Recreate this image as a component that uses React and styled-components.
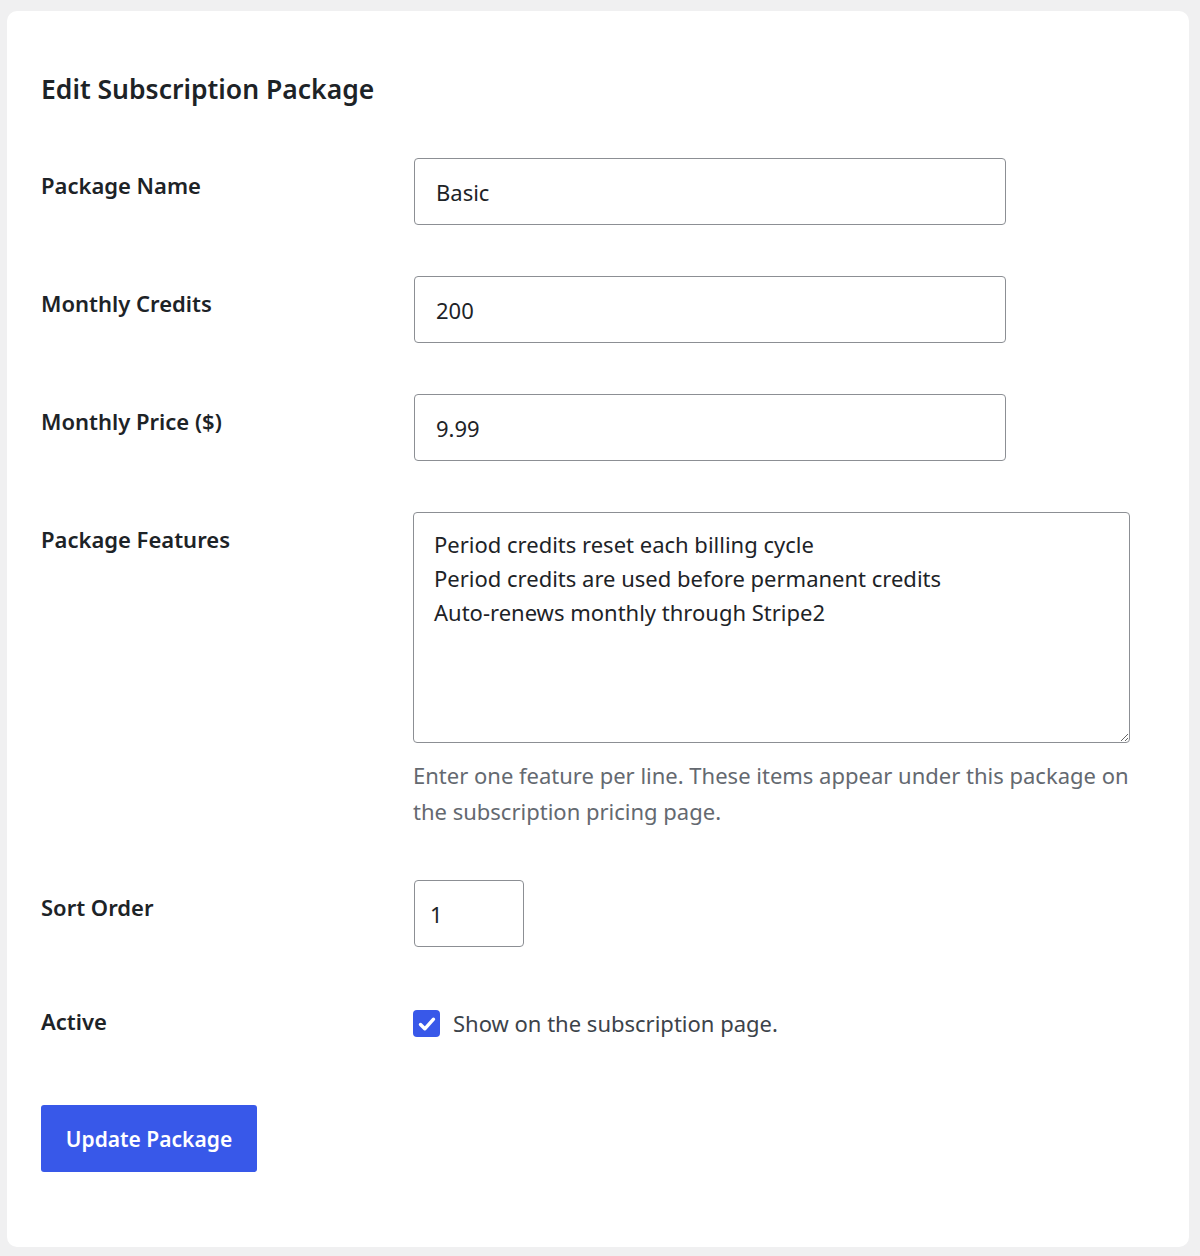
import React from 'react';
import styled, { createGlobalStyle } from 'styled-components';

const GlobalStyle = createGlobalStyle`
  html, body {
    margin: 0;
    padding: 0;
    background: #f0f0f1;
  }
  body {
    font-family: "Noto Sans", "Liberation Sans", sans-serif;
    color: #1d2327;
  }
`;

const Card = styled.div`
  margin: 11px 11px 9px 7px;
  background: #fff;
  border-radius: 10px;
  padding: 58px 34px 75px 34px;
  box-sizing: border-box;
  min-height: 1236px;
`;

const Title = styled.h1`
  margin: 0 0 24px;
  font-size: 26.5px;
  font-weight: 600;
  line-height: 40px;
  color: #1d2327;
`;

const Row = styled.div`
  display: grid;
  grid-template-columns: 373px 1fr;
  align-items: start;
  padding: ${(p) => p.$top || 25}px 0 26px;
`;

const Label = styled.label`
  padding-top: 12px;
  font-size: 22px;
  font-weight: 600;
  line-height: 30px;
`;

const Field = styled.input`
  display: block;
  box-sizing: border-box;
  width: ${(p) => p.$width || 592}px;
  height: 67px;
  padding: 0 ${(p) => p.$pad || 21}px;
  border: 1px solid #8c8f94;
  border-radius: 4px;
  font-family: inherit;
  font-size: 22px;
  color: #1d2327;
  background: #fff;
  outline: none;
`;

const TextArea = styled.textarea`
  display: block;
  box-sizing: border-box;
  width: 717px;
  height: 231px;
  margin-left: -1px;
  padding: 14px 20px;
  border: 1px solid #8c8f94;
  border-radius: 4px;
  font-family: inherit;
  font-size: 22px;
  line-height: 34px;
  color: #1d2327;
  outline: none;
`;

const Description = styled.p`
  margin: 14px 0 0 -1px;
  font-size: 22px;
  line-height: 36px;
  color: #646970;
  max-width: 722px;
`;

const CheckLine = styled.label`
  display: flex;
  align-items: center;
  gap: 13px;
  margin: 16px 0 0 -1px;
  font-size: 22px;
  line-height: 27px;
  color: #3c434a;
`;

const Box = styled.span`
  display: inline-flex;
  align-items: center;
  justify-content: center;
  width: 27px;
  height: 27px;
  border-radius: 4px;
  background: #3858e9;
`;

const Button = styled.button`
  margin-top: 42px;
  width: 216px;
  height: 67px;
  border: none;
  border-radius: 3px;
  background: #3858e9;
  color: #fff;
  font-family: inherit;
  font-size: 21px;
  font-weight: 600;
  cursor: pointer;
`;

const features = `Period credits reset each billing cycle
Period credits are used before permanent credits
Auto-renews monthly through Stripe2`;

const App = () => {
  return (
    <>
      <GlobalStyle />
      <Card>
        <Title>Edit Subscription Package</Title>
        <Row>
          <Label>Package Name</Label>
          <Field defaultValue="Basic" />
        </Row>
        <Row>
          <Label>Monthly Credits</Label>
          <Field defaultValue="200" />
        </Row>
        <Row>
          <Label>Monthly Price ($)</Label>
          <Field defaultValue="9.99" />
        </Row>
        <Row>
          <Label>Package Features</Label>
          <div>
            <TextArea defaultValue={features} />
            <Description>
              Enter one feature per line. These items appear under this package on the
              subscription pricing page.
            </Description>
          </div>
        </Row>
        <Row>
          <Label>Sort Order</Label>
          <Field $width={110} $pad={15} defaultValue="1" />
        </Row>
        <Row $top={21}>
          <Label>Active</Label>
          <CheckLine>
            <Box>
              <svg width="22" height="22" viewBox="0 0 22 22" fill="none">
                <path d="M4.5 11.5l4.3 4.3 8.7-9.6" stroke="#fff" strokeWidth="3.4" strokeLinecap="round" strokeLinejoin="round" />
              </svg>
            </Box>
            Show on the subscription page.
          </CheckLine>
        </Row>
        <Button>Update Package</Button>
      </Card>
    </>
  );
};

export default App;
